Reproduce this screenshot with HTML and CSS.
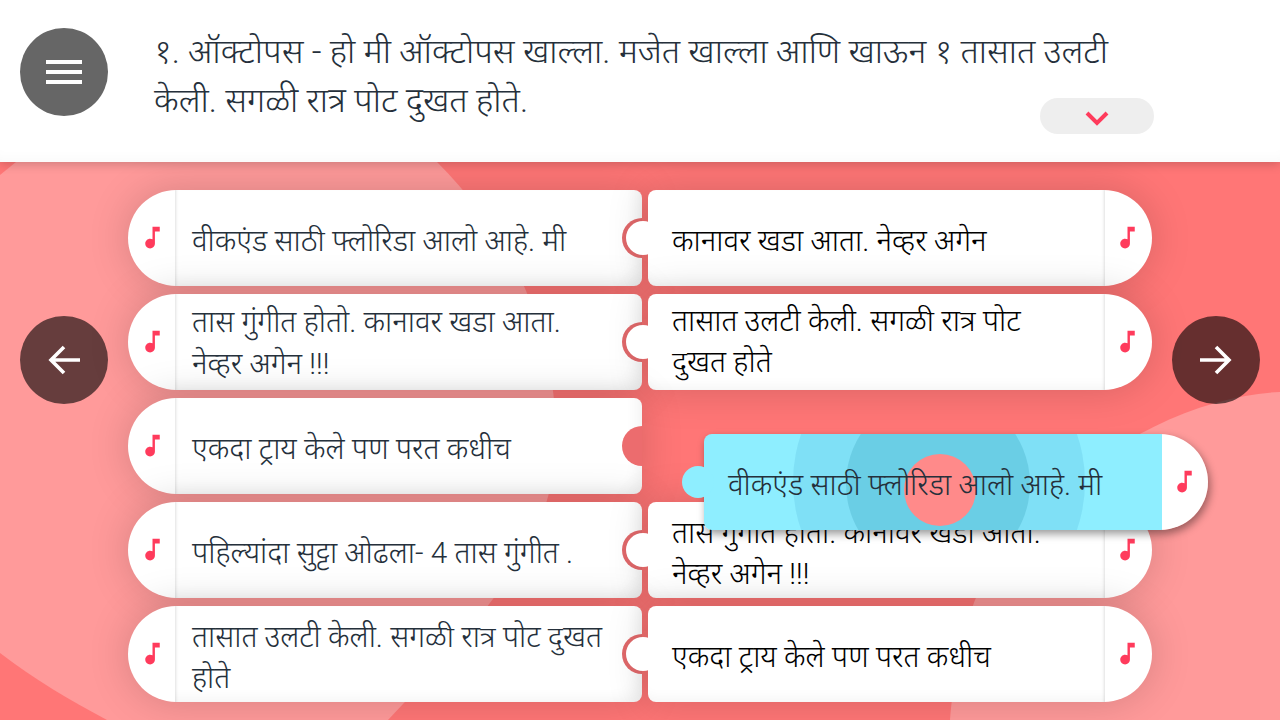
FILE: index.html
```html
<!DOCTYPE html>
<html>
    <head>
        <meta charset="utf-8">
        <title>Match</title>
        <link rel="stylesheet" href="styles.css">
    </head>
    <body>
        <svg width="0" height="0" class="defs">
            <symbol id="note" viewBox="0 0 24 24"><path d="M12 3v10.55c-.59-.34-1.27-.55-2-.55-2.21 0-4 1.79-4 4s1.79 4 4 4 4-1.79 4-4V7h4V3h-6z"/></symbol>
        </svg>

        <header class="top">
            <button class="round-btn menu-btn">
                <svg width="36" height="24" viewBox="0 0 36 24"><path d="M0 2h36M0 12h36M0 22h36" stroke="#fff" stroke-width="4"/></svg>
            </button>
            <p class="question">१. ऑक्टोपस - हो मी ऑक्टोपस खाल्ला. मजेत खाल्ला आणि खाऊन १ तासात उलटी केली. सगळी रात्र पोट दुखत होते.</p>
            <button class="more-btn">
                <svg width="24" height="15" viewBox="0 0 24 15"><path d="M2 2l10 10L22 2" fill="none" stroke="#ff3b5c" stroke-width="4"/></svg>
            </button>
        </header>

        <main class="stage">
            <svg class="blobs" width="1280" height="558" viewBox="0 162 1280 558">
                <path d="M0 175L16 162H437C520 245 556 340 556 440C556 530 500 600 388 720H107C70 700 35 680 0 653Z" fill="#ff9a9a"/>
                <path d="M1280 392C1180 396 1040 470 975 600C960 640 952 690 950 720H1280Z" fill="#ff9a9a"/>
            </svg>

            <button class="round-btn nav-btn">
                <svg width="32" height="30" viewBox="0 0 32 30"><path d="M32 15H3M16 2L3 15l13 13" fill="none" stroke="#fff" stroke-width="3.6"/></svg>
            </button>

            <div class="board">
                <div class="card left">
                    <div class="audio"><svg class="note"><use href="#note"/></svg></div>
                    <div class="text">वीकएंड साठी फ्लोरिडा आलो आहे. मी</div>
                    <span class="notch"></span>
                </div>
                <div class="card right">
                    <span class="tab"></span>
                    <div class="text">कानावर खडा आता. नेव्हर अगेन</div>
                    <div class="audio"><svg class="note"><use href="#note"/></svg></div>
                </div>

                <div class="card left">
                    <div class="audio"><svg class="note"><use href="#note"/></svg></div>
                    <div class="text text-high">तास गुंगीत होतो. कानावर खडा आता. नेव्हर अगेन !!!</div>
                    <span class="notch"></span>
                </div>
                <div class="card right">
                    <span class="tab"></span>
                    <div class="text text-high">तासात उलटी केली. सगळी रात्र पोट<br>दुखत होते</div>
                    <div class="audio"><svg class="note"><use href="#note"/></svg></div>
                </div>

                <div class="card left">
                    <div class="audio"><svg class="note"><use href="#note"/></svg></div>
                    <div class="text">एकदा ट्राय केले पण परत कधीच</div>
                    <span class="notch notch-open"></span>
                </div>
                <div class="slot"></div>

                <div class="card left">
                    <div class="audio"><svg class="note"><use href="#note"/></svg></div>
                    <div class="text">पहिल्यांदा सुट्टा ओढला- 4 तास गुंगीत .</div>
                    <span class="notch"></span>
                </div>
                <div class="card right">
                    <span class="tab"></span>
                    <div class="text text-low">तास गुंगीत होतो. कानावर खडा आता.<br>नेव्हर अगेन !!!</div>
                    <div class="audio"><svg class="note"><use href="#note"/></svg></div>
                </div>

                <div class="card left">
                    <div class="audio"><svg class="note"><use href="#note"/></svg></div>
                    <div class="text text-low">तासात उलटी केली. सगळी रात्र पोट दुखत होते</div>
                    <span class="notch"></span>
                </div>
                <div class="card right">
                    <span class="tab"></span>
                    <div class="text">एकदा ट्राय केले पण परत कधीच</div>
                    <div class="audio"><svg class="note"><use href="#note"/></svg></div>
                </div>
            </div>

            <button class="round-btn nav-btn">
                <svg width="32" height="30" viewBox="0 0 32 30"><path d="M0 15h29M16 2l13 13-13 13" fill="none" stroke="#fff" stroke-width="3.6"/></svg>
            </button>

            <div class="card dragged">
                <span class="drag-tab"></span>
                <div class="ripple-clip">
                    <span class="ring ring-big"></span>
                    <span class="ring ring-small"></span>
                    <span class="touch"></span>
                </div>
                <div class="text">वीकएंड साठी फ्लोरिडा आलो आहे. मी</div>
                <div class="audio"><svg class="note"><use href="#note"/></svg></div>
            </div>
        </main>
    </body>
</html>
```

FILE: styles.css
```css
* {
    box-sizing: border-box;
}

html, body {
    margin: 0;
    height: 100%;
    overflow: hidden;
}

body {
    display: flex;
    flex-direction: column;
    font-family: "Roboto", "Noto Sans", sans-serif;
    font-weight: 300;
    color: #25303b;
}

.defs {
    position: absolute;
}

button {
    border: 0;
    padding: 0;
}

.round-btn {
    display: flex;
    flex: none;
    align-items: center;
    justify-content: center;
    width: 88px;
    height: 88px;
    border-radius: 50%;
    background: rgba(0, 0, 0, 0.6);
}

/* header */
.top {
    position: relative;
    z-index: 2;
    display: flex;
    flex: none;
    height: 162px;
    padding: 28px 20px 0;
    background: #fff;
    box-shadow: 0 2px 10px rgba(0, 0, 0, 0.2), inset 0 -12px 16px -12px rgba(0, 0, 0, 0.04);
}

.menu-btn {
    background: #666;
}

.question {
    width: 970px;
    margin: -1px 0 0 46px;
    font-size: 34px;
    line-height: 49px;
}

.more-btn {
    display: flex;
    align-items: center;
    justify-content: center;
    width: 114px;
    height: 36px;
    margin: 70px 0 0 -84px;
    padding-top: 4px;
    border-radius: 18px;
    background: #eee;
}

/* play area */
.stage {
    position: relative;
    display: flex;
    flex: 1;
    align-items: flex-start;
    gap: 20px;
    padding: 28px 20px 0;
    background: #ff7676;
}

.blobs {
    position: absolute;
    top: 0;
    left: 0;
}

.nav-btn {
    position: relative;
    margin-top: 126px;
}

.board {
    position: relative;
    display: grid;
    grid-template-columns: 514px 504px;
    grid-auto-rows: 96px;
    gap: 8px 6px;
}

.card {
    position: relative;
    display: flex;
    border-radius: 48px 8px 8px 48px;
    background: #fff;
    box-shadow: 0 0 40px rgba(0, 0, 0, 0.17);
}

.card.right {
    border-radius: 8px 48px 48px 8px;
}

.audio {
    display: flex;
    flex: none;
    align-items: center;
    justify-content: center;
    width: 47px;
    padding-left: 2px;
}

.note {
    width: 29px;
    height: 29px;
    margin-bottom: 2px;
    fill: #ff3b5c;
}

.text {
    position: relative;
    display: flex;
    flex: 1;
    align-items: center;
    padding: 5px 30px 0 17px;
    font-size: 29.7px;
    line-height: 42px;
    border-radius: 0 8px 8px 0;
    box-shadow: inset 3px 0 3px -2px rgba(0, 0, 0, 0.12), inset -16px -14px 16px -14px rgba(0, 0, 0, 0.07);
}

.card.right .text {
    display: block;
    align-content: center;
    padding: 5px 24px 0;
    color: #000;
    line-height: 41px;
    border-radius: 8px 0 0 8px;
    box-shadow: inset -3px 0 3px -2px rgba(0, 0, 0, 0.12), inset 0 -14px 14px -12px rgba(0, 0, 0, 0.05);
}

.card .text-low {
    padding-top: 6px;
    line-height: 41px;
}

.card.right .text-low {
    padding-top: 6px;
}

.card .text-high {
    padding-top: 2px;
}

.card.right .text-high {
    padding-top: 0;
    padding-bottom: 3px;
}

.card.right .audio {
    padding: 0 2px 0 0;
}

.notch {
    position: absolute;
    top: 28px;
    right: -20px;
    width: 40px;
    height: 40px;
    border-radius: 50%;
    background: #e0686a;
    clip-path: inset(0 20px 0 0);
}

.notch-open {
    background: #ec6c6e;
}

.tab {
    position: absolute;
    top: 31px;
    left: -22px;
    z-index: 1;
    width: 34px;
    height: 34px;
    border-radius: 50%;
    background: #fff;
}

/* card being dragged */
.dragged {
    position: absolute;
    top: 272px;
    left: 704px;
    width: 504px;
    height: 96px;
    border-radius: 8px 48px 48px 8px;
    background: linear-gradient(to right, #8eeeff 458px, #fff 458px);
    box-shadow: 2px 4px 8px rgba(0, 0, 0, 0.4);
}

.dragged .text {
    z-index: 2;
    flex: none;
    width: 458px;
    padding: 6px 24px 0;
    box-shadow: none;
}

.dragged .audio {
    padding: 0 2px 0 0;
}

.drag-tab {
    position: absolute;
    top: 32px;
    left: -22px;
    width: 32px;
    height: 32px;
    border-radius: 50%;
    background: #8eeeff;
}

.ripple-clip {
    position: absolute;
    top: 0;
    left: 0;
    z-index: 1;
    width: 458px;
    height: 96px;
    overflow: hidden;
    border-radius: 8px 0 0 8px;
}

.ring, .touch {
    position: absolute;
    border-radius: 50%;
}

.ring-big {
    top: -98px;
    left: 89px;
    width: 292px;
    height: 292px;
    background: rgba(0, 110, 165, 0.1);
}

.ring-small {
    top: -42px;
    left: 142px;
    width: 184px;
    height: 184px;
    background: rgba(0, 115, 140, 0.16);
}

.touch {
    top: 20px;
    left: 200px;
    width: 72px;
    height: 72px;
    background: #ff8a8a;
}
```
